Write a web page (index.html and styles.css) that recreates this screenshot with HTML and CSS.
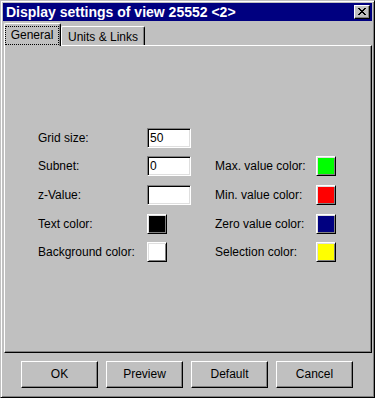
FILE: index.html
```html
<!DOCTYPE html>
<html>
<head>
<meta charset="utf-8">
<link rel="stylesheet" href="styles.css">
</head>
<body>
<div class="window">
  <div class="titlebar">
    <span class="title">Display settings of view 25552 &lt;2&gt;</span>
    <div class="close-btn">
      <svg width="8" height="7" viewBox="0 0 8 7" shape-rendering="crispEdges">
        <path d="M0 0h2v1H0zM6 0h2v1H6zM1 1h2v1H1zM5 1h2v1H5zM2 2h4v1H2zM3 3h2v1H3zM2 4h4v1H2zM1 5h2v1H1zM5 5h2v1H5zM0 6h2v1H0zM6 6h2v1H6z" fill="#000"/>
      </svg>
    </div>
  </div>
  <div class="tabs">
    <div class="tab tab-active"><span class="focus">General</span></div>
    <div class="tab tab-units">Units &amp; Links</div>
  </div>
  <div class="panel">
    <div class="form">
      <span class="label">Grid size:</span>
      <input class="field" type="text" value="50">
      <span></span><span></span>

      <span class="label">Subnet:</span>
      <input class="field" type="text" value="0">
      <span class="label">Max. value color:</span>
      <div class="swatch"><div class="fill green"></div></div>

      <span class="label">z-Value:</span>
      <input class="field" type="text" value="">
      <span class="label">Min. value color:</span>
      <div class="swatch"><div class="fill red"></div></div>

      <span class="label">Text color:</span>
      <div class="swatch"><div class="fill black"></div></div>
      <span class="label">Zero value color:</span>
      <div class="swatch"><div class="fill navy"></div></div>

      <span class="label">Background color:</span>
      <div class="swatch"><div class="fill white"></div></div>
      <span class="label">Selection color:</span>
      <div class="swatch"><div class="fill yellow"></div></div>
    </div>
  </div>
  <div class="buttons">
    <div class="btn">OK</div>
    <div class="btn">Preview</div>
    <div class="btn">Default</div>
    <div class="btn">Cancel</div>
  </div>
</div>
</body>
</html>
```
FILE: styles.css
```css
html, body {
  margin: 0;
  padding: 0;
  background: #c0c0c0;
}
body {
  font-family: "Liberation Sans", Arial, sans-serif;
  font-size: 12px;
  color: #000;
}
.window {
  box-sizing: border-box;
  width: 375px;
  height: 398px;
  background: #c0c0c0;
  border: 1px solid;
  border-color: #c0c0c0 #000 #000 #c0c0c0;
  box-shadow: inset 1px 1px #fff, inset -1px -1px #808080;
  padding: 2px;
  display: flex;
  flex-direction: column;
}
.titlebar {
  height: 18px;
  background: #000080;
  color: #fff;
  display: flex;
  align-items: center;
  justify-content: space-between;
  padding: 0 2px 0 3px;
}
.title {
  font-weight: bold;
  font-size: 14px;
  line-height: 18px;
  white-space: nowrap;
}
.close-btn {
  box-sizing: border-box;
  width: 16px;
  height: 14px;
  background: #c0c0c0;
  border: 1px solid;
  border-color: #fff #000 #000 #fff;
  box-shadow: inset -1px -1px #808080;
  display: flex;
  padding: 2px 0 0 3px;
}
.tabs {
  margin-top: 1px;
  height: 23px;
  display: flex;
  align-items: flex-end;
  padding-left: 1px;
}
.tab {
  box-sizing: border-box;
  background: #c0c0c0;
  border-top: 1px solid #fff;
  border-left: 1px solid #fff;
  border-right: 1px solid #000;
  box-shadow: inset -1px 0 #808080;
  border-radius: 2px 2px 0 0;
  text-align: center;
  line-height: 14px;
  white-space: nowrap;
}
.tab-active {
  position: relative;
  z-index: 1;
  width: 57px;
  height: 23px;
  margin-bottom: -1px;
  padding-top: 2px;
}
.focus {
  display: block;
  box-sizing: border-box;
  width: 54px;
  height: 19px;
  border: 1px dotted #000;
  padding-top: 1px;
}
.tab-units {
  width: 84px;
  height: 19px;
  padding-top: 3px;
}
.panel {
  box-sizing: border-box;
  height: 308px;
  margin-left: 1px;
  border: 1px solid;
  border-color: #fff #000 #000 #fff;
  box-shadow: inset -1px -1px #808080;
  padding: 82px 0 0 33px;
}
.form {
  display: grid;
  grid-template-columns: 109px 68px 101px 20px;
  grid-template-rows: 20px 21px 21px 20px 20px;
  row-gap: 8px;
  align-items: start;
}
.label {
  line-height: 20px;
  white-space: nowrap;
}
.field {
  box-sizing: border-box;
  width: 44px;
  height: 20px;
  margin: 0;
  padding: 0 0 0 1px;
  background: #fff;
  border: 1px solid;
  border-color: #808080 #fff #fff #808080;
  box-shadow: inset 1px 1px #000, inset -1px -1px #dfdfdf;
  font-family: "Liberation Sans", Arial, sans-serif;
  font-size: 12px;
  color: #000;
  outline: none;
  text-indent: 1px;
}
.swatch {
  box-sizing: border-box;
  width: 20px;
  height: 20px;
  border: 1px solid;
  border-color: #fff #000 #000 #fff;
  box-shadow: inset 1px 1px #dfdfdf, inset -1px -1px #808080;
  padding: 1px;
}
.fill {
  width: 16px;
  height: 16px;
}
.green { background: #00ff00; }
.red { background: #ff0000; }
.black { background: #000000; }
.navy { background: #000080; }
.white { background: #ffffff; }
.yellow { background: #ffff00; }
.buttons {
  margin-top: 8px;
  display: flex;
  gap: 8px;
  padding-left: 18px;
}
.btn {
  box-sizing: border-box;
  width: 77px;
  height: 27px;
  border: 1px solid;
  border-color: #fff #000 #000 #fff;
  box-shadow: inset -1px -1px #808080;
  text-align: center;
  line-height: 25px;
}
```
